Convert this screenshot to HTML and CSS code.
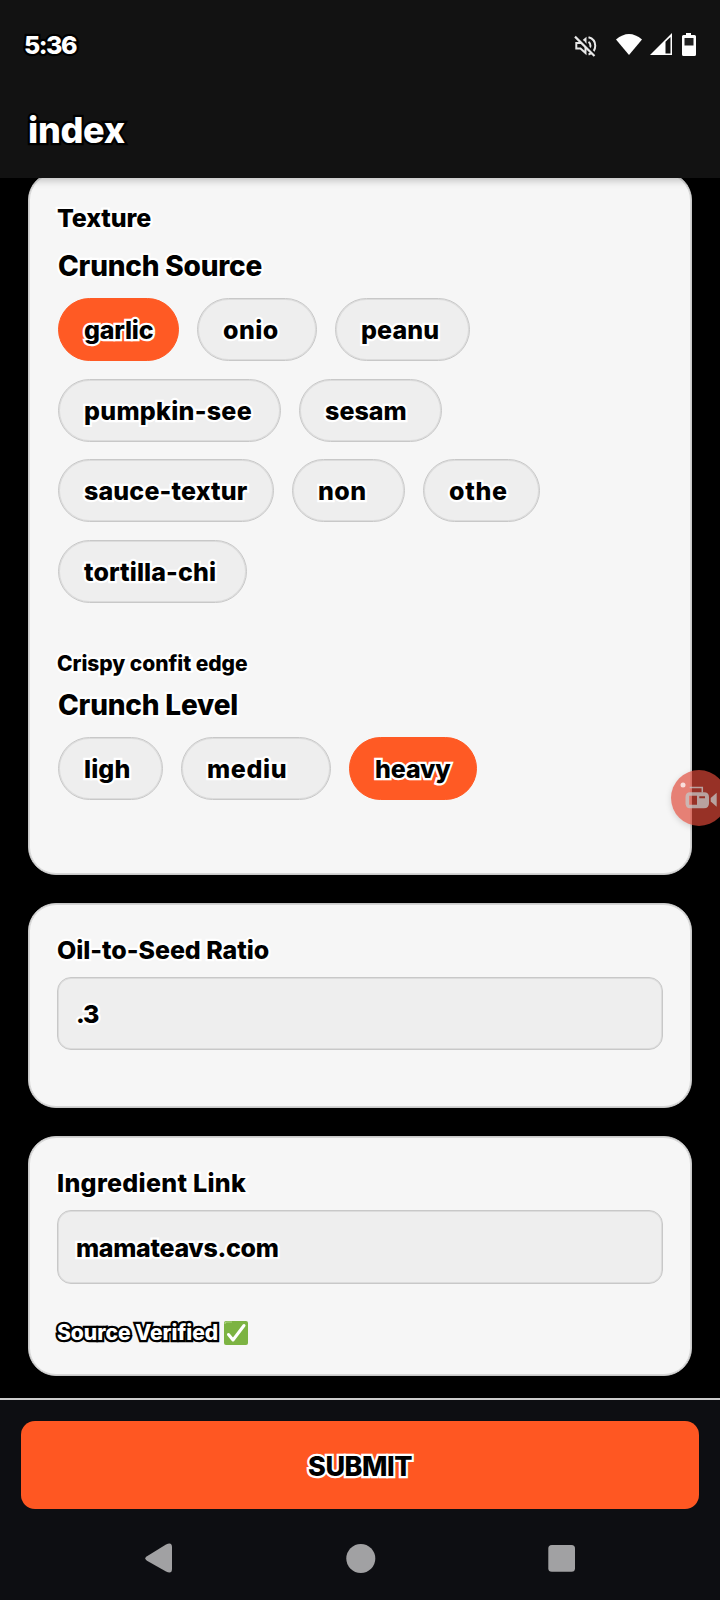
FILE: index.html
```html
<!DOCTYPE html>
<html lang="en">
<head>
<meta charset="utf-8">
<title>index</title>
<link rel="stylesheet" href="styles.css">
</head>
<body>
<div class="screen">
  <header class="top">
    <div class="status">
      <span class="clock t">5:36</span>
      <svg class="status-icons" viewBox="0 0 124 26" width="124" height="26">
        <g transform="translate(0 2)">
          <g fill="none" stroke="#e8e8e8" stroke-width="2">
            <path d="M2.300 8v5.600h4.200l5 4.400V3.800L6.600 8Z"/>
            <path d="M14.500 6.800c2.600 1.700 2.600 6.200 0 8M14.500 2.200c9 2.500 9 14.500 0 17.300"/>
          </g>
          <path d="M2.800 .8 22 20.500" stroke="#121212" stroke-width="3"/>
          <path d="M1 1.600 20.500 21" stroke="#e8e8e8" stroke-width="2.200"/>
        </g>
        <path d="M42 6.500Q55-4.500 68 6.500L55 22Z" fill="#fff"/>
        <path d="M76 22 98 0v22Z" fill="#fff"/>
        <path d="M91.500 8.800 96.500 4v16.500h-5Z" fill="#121212"/>
        <path d="M112 0h5v2h3.500q1.500 0 1.500 1.500V21.500q0 1.500-1.500 1.500h-11q-1.500 0-1.500-1.500V3.500Q108 2 109.500 2H112Z" fill="#fff"/>
        <path d="M110.500 5h9v7.500h-9Z" fill="#222"/>
      </svg>
    </div>
    <h1 class="title"><span class="t">index</span></h1>
  </header>

  <main class="content">
    <section class="card card-texture">
      <h2 class="label"><span class="t l-texture">Texture</span></h2>
      <div class="group">
        <h3 class="subtitle"><span class="t l-source">Crunch Source</span></h3>
        <div class="chips">
          <div class="chip on garlic"><span class="t">garlic</span></div>
          <div class="chip onion"><span class="t">onio</span></div>
          <div class="chip peanut"><span class="t">peanu</span></div>
          <div class="break"></div>
          <div class="chip pumpkin"><span class="t">pumpkin-see</span></div>
          <div class="chip sesame"><span class="t">sesam</span></div>
          <div class="break"></div>
          <div class="chip sauce"><span class="t">sauce-textur</span></div>
          <div class="chip none"><span class="t">non</span></div>
          <div class="chip other"><span class="t">othe</span></div>
          <div class="break"></div>
          <div class="chip tortilla"><span class="t">tortilla-chi</span></div>
        </div>
      </div>
      <p class="note note-edge"><span class="t l-edge">Crispy confit edge</span></p>
      <div class="group group-level">
        <h3 class="subtitle"><span class="t l-level">Crunch Level</span></h3>
        <div class="chips">
          <div class="chip light"><span class="t">ligh</span></div>
          <div class="chip medium"><span class="t">mediu</span></div>
          <div class="chip on heavy"><span class="t">heavy</span></div>
        </div>
      </div>
    </section>

    <section class="card card-ratio">
      <h2 class="label"><span class="t l-ratio">Oil-to-Seed Ratio</span></h2>
      <div class="field"><span class="t l-three">.3</span></div>
    </section>

    <section class="card card-link">
      <h2 class="label"><span class="t l-link">Ingredient Link</span></h2>
      <div class="field field-link"><span class="t l-url">mamateavs.com</span></div>
      <p class="note verified"><span class="t l-verified">Source Verified</span>
        <svg class="check" viewBox="0 0 24 24" width="24" height="24">
          <rect width="24" height="24" rx="2" fill="#7cb342"/>
          <path d="M1 3q0-2 2-2h5" fill="none" stroke="#aed581" stroke-width="1.200"/>
          <path d="M4.500 13.500 9 19 20 4.500" fill="none" stroke="#fff" stroke-width="3" stroke-linecap="round" stroke-linejoin="round"/>
        </svg>
      </p>
    </section>
  </main>

  <footer class="bottom">
    <button class="submit"><span class="t l-submit">SUBMIT</span></button>
    <nav class="nav">
      <svg viewBox="0 0 30 30" width="30" height="30"><path d="M2 13.300 21 1.400Q27 -1.500 27 4V26Q27 31.500 21 28.600L2 17.700Q-1.500 15.500 2 13.300Z" fill="#a1a1a3"/></svg>
      <svg viewBox="0 0 30 30" width="30" height="30"><circle cx="14.800" cy="15.400" r="14.500" fill="#a1a1a3"/></svg>
      <svg viewBox="0 0 30 30" width="30" height="30"><rect x="2.300" y="2.100" width="26.700" height="26.700" rx="3.500" fill="#a1a1a3"/></svg>
    </nav>
  </footer>

  <div class="recorder">
    <svg viewBox="0 0 56 56" width="56" height="56">
      <circle cx="12" cy="15" r="2.500" fill="#fff" opacity=".75"/>
      <g opacity=".75" fill="#c4c8c8">
        <path d="M18.700 17.500h12.600v5" fill="none" stroke="#c4c8c8" stroke-width="1.500"/>
        <path fill-rule="evenodd" d="M19 22.300h14q5 0 5 5v6q0 5-5 5H19q-4.500 0-4.500-5v-6q0-5 4.500-5ZM18 25.700v9h8v-9ZM28.300 26.300v2H34v-2Z"/>
        <path d="M39.700 28 45.700 22.700v14L39.700 31.500Z"/>
      </g>
    </svg>
  </div>
</div>
</body>
</html>
```
FILE: styles.css
```css
* { box-sizing: border-box; margin: 0; padding: 0; }
body { width: 720px; height: 1600px; overflow: hidden; background: #000; font-family: Inter, "Open Sans", sans-serif; font-weight: 800; }
.screen { position: relative; display: flex; flex-direction: column; width: 720px; height: 1600px; overflow: hidden; }
h1, h2, h3 { font-weight: inherit; }
.t { -webkit-text-stroke: 4.4px #fff; paint-order: stroke fill; stroke-linejoin: round; color: #000; white-space: nowrap; }

.top { position: relative; z-index: 1; flex: none; height: 178px; background: #121212; box-shadow: 0 2px 8px rgba(0, 0, 0, .25); }
.status { display: flex; justify-content: space-between; height: 90px; padding: 33px 22px 0 24px; }
.clock { font-size: 25px; line-height: 25px; letter-spacing: -1.5px; color: #fff; -webkit-text-stroke-color: #000; }
.title { padding-left: 28px; font-size: 36px; line-height: 80px; letter-spacing: -.3px; }
.title .t { color: #fff; -webkit-text-stroke-color: #000; }

.content { flex: none; display: flex; flex-direction: column; gap: 28px; height: 1220px; padding: 0 28px; overflow: hidden; }
.card { flex: none; border: 1px solid #c8c8c8; box-shadow: inset 0 0 0 1px #d6d6d6; border-radius: 28px; background: #f6f6f6; padding: 31px 28px 0; }
.card-texture { height: 703px; margin-top: -6px; padding-top: 30px; }
.card-ratio { height: 205px; }
.card-link { height: 240px; }

.label { font-size: 25px; line-height: 30px; }
.group { padding: 15px 0 0 1px; }
.subtitle { font-size: 28px; line-height: 36px; margin-bottom: 14px; }
.note { font-size: 21px; line-height: 28px; }
.note-edge { margin-top: 47px; }
.group-level { padding-top: 9px; }

.chips { display: flex; flex-wrap: wrap; column-gap: 18px; }
.break { width: 100%; height: 17.7px; }
.chip { height: 63px; border: 1px solid #c8c8c8; box-shadow: inset 0 0 0 1px #dcdcdc; border-radius: 32px; background: #eee; padding-left: 25px; font-size: 25px; line-height: 63px; }
.chip.on { border-color: #ff5a24; box-shadow: none; background: #ff5a24; }
.garlic { width: 121px; letter-spacing: -.2px; }
.onion { width: 120px; letter-spacing: .4px; }
.peanut { width: 135px; letter-spacing: .1px; }
.pumpkin { width: 223px; letter-spacing: .28px; }
.sesame { width: 143px; letter-spacing: .05px; }
.sauce { width: 216px; letter-spacing: .15px; }
.none { width: 113px; letter-spacing: .4px; }
.other { width: 117px; letter-spacing: .7px; }
.tortilla { width: 189px; letter-spacing: .1px; }
.light { width: 105px; letter-spacing: .1px; }
.medium { width: 150px; letter-spacing: .65px; }
.heavy { width: 128px; letter-spacing: -.1px; }
.l-texture { letter-spacing: -.1px; }
.l-source, .l-level { letter-spacing: -.2px; }
.l-edge { letter-spacing: -.05px; }
.l-verified { letter-spacing: 0; }
.l-ratio { letter-spacing: -.05px; }
.l-link { letter-spacing: .3px; }
.l-url { letter-spacing: -.32px; }
.l-submit { letter-spacing: -.5px; }

.field { height: 73px; margin-top: 12px; border: 1px solid #c8c8c8; box-shadow: inset 0 0 0 1px #dcdcdc; border-radius: 14px; background: #eee; padding-left: 18px; font-size: 25px; line-height: 73px; }
.l-three { letter-spacing: -1.3px; }
.field-link { height: 74px; line-height: 75px; }
.verified { display: flex; align-items: center; gap: 6px; margin-top: 35px; }
.l-verified { color: #fff; -webkit-text-stroke-color: #000; }

.bottom { flex: none; height: 202px; border-top: 2px solid #ccc; background: #0d0e12; padding: 21px 21px 0; }
.submit { display: block; width: 678px; height: 88px; border: 0; border-radius: 14px; background: #ff5722; font: 800 27px/88px Inter, sans-serif; padding-top: 2px; }
.nav { display: flex; justify-content: space-between; padding: 34px 123px 0 124px; }

.recorder { position: absolute; left: 671px; top: 770px; width: 56px; height: 56px; border-radius: 50%; background: rgba(222, 72, 56, .68); box-shadow: 0 2px 6px rgba(0, 0, 0, .15); }
.recorder svg { display: block; }
```
